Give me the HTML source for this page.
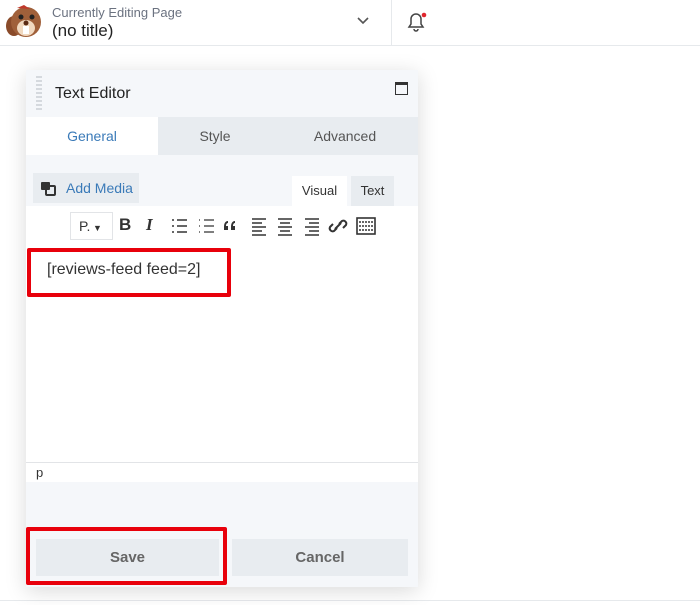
<!DOCTYPE html><html><head><style>
body{margin:0;width:700px;height:605px;background:#fff;font-family:"Liberation Sans",sans-serif;position:relative;overflow:hidden}
.a{position:absolute}
</style></head><body>
<div class="a" style="left:0;top:0;width:700px;height:45px;border-bottom:1px solid #e6e9ec"></div>
<div class="a" style="left:391px;top:0;width:1px;height:45px;background:#e6e9ec"></div>
<svg class="a" style="left:4px;top:4px" width="40" height="36" viewBox="0 0 40 36"><ellipse cx="10" cy="22" rx="8" ry="10" fill="#8a4b2a"/><circle cx="22" cy="18" r="15" fill="#a0603a"/><ellipse cx="22" cy="24" rx="9" ry="8" fill="#f1d9c0"/><rect x="19" y="22" width="6" height="8" fill="#fff"/><circle cx="17" cy="13" r="2.5" fill="#222"/><circle cx="28" cy="13" r="2.5" fill="#222"/><circle cx="22" cy="19" r="2.5" fill="#5a2a14"/><path d="M13 4 L20 1 L26 5 Z" fill="#c0392b"/></svg>
<div class="a" style="left:52px;top:5px;font-size:13px;color:#6b7280">Currently Editing Page</div>
<div class="a" style="left:52px;top:21px;font-size:17px;color:#222">(no title)</div>
<svg class="a" style="left:356px;top:16px" width="14" height="10"><path d="M2 2 L7 7 L12 2" stroke="#555" stroke-width="1.6" fill="none"/></svg>
<svg class="a" style="left:405px;top:10px" width="22" height="24"><path d="M4 17 H18 L16 14 V9 A5 5 0 0 0 6 9 V14 Z" stroke="#444" stroke-width="1.5" fill="none"/><path d="M9 19 A2 2 0 0 0 13 19" stroke="#444" stroke-width="1.5" fill="none"/><circle cx="19" cy="5" r="2.3" fill="#e0262d"/></svg>
<div class="a" style="left:0;top:600px;width:700px;height:1px;background:#e6e9ec"></div>
<div class="a" style="left:26px;top:70px;width:392px;height:517px;background:#f5f7fa;box-shadow:0 4px 20px rgba(0,0,0,.15)">
 <div class="a" style="left:10px;top:6px;width:6px;height:34px;background:repeating-linear-gradient(#d5d9de 0 2px,transparent 2px 4px)"></div>
 <div class="a" style="left:29px;top:15px;font-size:16px;color:#222">Text Editor</div>
 <div class="a" style="left:369px;top:12px;width:11px;height:9px;border:1.5px solid #333;border-top-width:3px"></div>
 <div class="a" style="left:0;top:47px;width:392px;height:38px;background:#e8ecf0"></div>
 <div class="a" style="left:0;top:47px;width:132px;height:38px;background:#fff;color:#3a7ab8;font-size:14px;text-align:center;line-height:38px">General</div>
 <div class="a" style="left:132px;top:47px;width:114px;line-height:38px;text-align:center;font-size:14px;color:#555">Style</div>
 <div class="a" style="left:246px;top:47px;width:146px;line-height:38px;text-align:center;font-size:14px;color:#555">Advanced</div>
 <div class="a" style="left:7px;top:103px;width:106px;height:30px;background:#e8ecf0"></div>
 <svg class="a" style="left:14px;top:110px" width="18" height="17"><rect x="1" y="2" width="9" height="8" rx="1" fill="#333"/><rect x="6" y="6" width="9" height="9" rx="1" fill="none" stroke="#333" stroke-width="2"/></svg>
 <div class="a" style="left:40px;top:110px;font-size:14px;color:#3a7ab8">Add Media</div>
 <div class="a" style="left:266px;top:106px;width:55px;height:30px;background:#fff;font-size:13px;line-height:30px;text-align:center;color:#333">Visual</div>
 <div class="a" style="left:325px;top:106px;width:43px;height:30px;background:#e8ecf0;font-size:13px;line-height:30px;text-align:center;color:#333">Text</div>
 <div class="a" style="left:0;top:136px;width:392px;height:256px;background:#fff;border-bottom:1px solid #e2e4e7"></div>
 <div class="a" style="left:44px;top:142px;width:41px;height:26px;border:1px solid #e2e4e7;font-size:14px;line-height:26px;color:#333;text-indent:8px">P.<span style="font-size:9px"> ▼</span></div>
 <div class="a" style="left:93px;top:145px;font-size:17px;color:#333;letter-spacing:0;white-space:nowrap;word-spacing:0"><b>B</b></div>
 <div class="a" style="left:120px;top:145px;font-size:17px;color:#333;font-family:'Liberation Serif',serif"><i><b>I</b></i></div>
 <svg class="a" style="left:146px;top:146px" width="210" height="20" stroke="#333" stroke-width="1.6" fill="none">
  <path d="M0 4h2M0 10h2M0 16h2M5 4h10M5 10h10M5 16h10"/>
  <path d="M27 4h1M27 10h1M27 16h1M32 4h10M32 10h10M32 16h10" stroke-width="1.3"/>
  <path d="M56 5c-3 0-4 3-4 6v3h4v-4h-2c0-2 1-3 2-3zM63 5c-3 0-4 3-4 6v3h4v-4h-2c0-2 1-3 2-3z" fill="#333" stroke="none"/>
  <path d="M80 3h14M80 7h10M80 11h14M80 15h10M80 19h14"/>
  <path d="M106 3h14M108 7h10M106 11h14M108 15h10M106 19h14"/>
  <path d="M133 3h14M137 7h10M133 11h14M137 15h10M133 19h14"/>
  <path d="M165 12l-3 3a3 3 0 0 1-4-4l3-3M167 8l3-3a3 3 0 0 1 4 4l-3 3M163 13l6-6" stroke-width="2"/>
  <rect x="185" y="2" width="18" height="16"/><path d="M187 6h14M187 10h14M187 14h14" stroke-dasharray="2 1"/>
 </svg>
 <div class="a" style="left:21px;top:191px;font-size:16px;color:#333">[reviews-feed feed=2]</div>
 <div class="a" style="left:1px;top:178px;width:196px;height:41px;border:4px solid #e8000b;border-radius:2px"></div>
 <div class="a" style="left:10px;top:396px;font-size:13px;color:#333">p</div>
 <div class="a" style="left:0;top:393px;width:392px;height:19px;background:#fff"></div>
 <div class="a" style="left:10px;top:395px;font-size:13px;color:#333">p</div>
 <div class="a" style="left:10px;top:469px;width:183px;height:37px;background:#e8ecf0;font-size:15px;font-weight:bold;color:#666;text-align:center;line-height:37px">Save</div>
 <div class="a" style="left:206px;top:469px;width:176px;height:37px;background:#e8ecf0;font-size:15px;font-weight:bold;color:#666;text-align:center;line-height:37px">Cancel</div>
 <div class="a" style="left:0;top:457px;width:193px;height:50px;border:4px solid #e8000b;border-radius:2px"></div>
</div>
</body></html>
